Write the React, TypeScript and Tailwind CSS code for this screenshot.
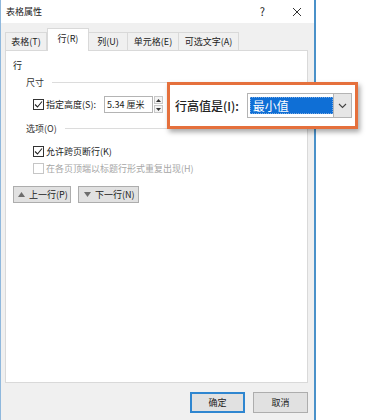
import React from "react";

function Check({ checked = false, disabled = false }: { checked?: boolean; disabled?: boolean }) {
  return (
    <div
      className={`w-[11px] h-[11px] border bg-white flex items-center justify-center ${
        disabled ? "border-[#c6c6c6]" : "border-[#333]"
      }`}
    >
      {checked && (
        <svg width="9" height="9" viewBox="0 0 9 9">
          <path d="M1 4.5 L3.5 7 L8 1.5" fill="none" stroke="#222" strokeWidth="1.1" />
        </svg>
      )}
    </div>
  );
}

export default function App() {
  return (
    <div className="relative w-[370px] h-[420px] bg-white overflow-hidden font-['Noto_Sans_CJK_SC',sans-serif] text-[9px] text-[#1a1a1a] leading-none">
      <div className="w-[316px] h-[420px] flex flex-col border-l border-l-[#8fb8dd] border-r-2 border-r-[#4a91c9] bg-[#f0f0f0]">
        {/* Title bar */}
        <div className="h-[23px] bg-white flex items-center pl-[5px] shrink-0">
          <span className="text-[9px]">表格属性</span>
          <div className="flex-1" />
          <span className="text-[11px] mr-[27px]">?</span>
          <svg width="10" height="10" viewBox="0 0 10 10" className="mr-[12px]">
            <path d="M1 1 L9 9 M9 1 L1 9" stroke="#333" strokeWidth="1" />
          </svg>
        </div>
        {/* Tabs */}
        <div className="h-[27px] flex items-end pl-[4px] shrink-0 relative z-10">
          <div className="h-[18px] w-[42px] border border-[#d9d9d9] border-b-0 bg-[#f0f0f0] flex items-center justify-center">表格(T)</div>
          <div className="h-[23px] w-[42px] -mb-[1px] border border-[#d9d9d9] border-b-0 bg-white flex items-start pt-[5px] justify-center">行(R)</div>
          <div className="h-[18px] w-[39px] border border-[#d9d9d9] border-b-0 border-l-0 bg-[#f0f0f0] flex items-center justify-center">列(U)</div>
          <div className="h-[18px] w-[51px] border border-[#d9d9d9] border-b-0 border-l-0 bg-[#f0f0f0] flex items-center justify-center">单元格(E)</div>
          <div className="h-[18px] w-[60px] border border-[#d9d9d9] border-b-0 border-l-0 bg-[#f0f0f0] flex items-center justify-center">可选文字(A)</div>
        </div>
        {/* Panel */}
        <div className="ml-[4px] mr-[6px] h-[333px] shrink-0 border border-[#d9d9d9] bg-white flex flex-col pl-[7px]">
          <div className="mt-[10px]">行</div>
          <div className="mt-[8px] ml-[13px] flex items-center">
            <span className="text-[#333]">尺寸</span>
            <div className="ml-[8px] flex-1 h-px bg-[#dcdcdc] mr-[8px]" />
          </div>
          <div className="mt-[9px] ml-[20px] flex items-center">
            <Check checked />
            <span className="ml-[2px]">指定高度(S):</span>
            <div className="ml-[8px] w-[49px] h-[17px] border border-[#b4b4b4] flex items-center pl-[2px]">5.34 厘米</div>
            <div className="ml-[1px] w-[9px] h-[17px] flex flex-col gap-px">
              <div className="flex-1 border border-[#c8c8c8] bg-[#f4f4f4] flex items-center justify-center">
                <svg width="5" height="3" viewBox="0 0 5 3"><path d="M0 3 L2.5 0 L5 3Z" fill="#333" /></svg>
              </div>
              <div className="flex-1 border border-[#c8c8c8] bg-[#f4f4f4] flex items-center justify-center">
                <svg width="5" height="3" viewBox="0 0 5 3"><path d="M0 0 L2.5 3 L5 0Z" fill="#333" /></svg>
              </div>
            </div>
          </div>
          <div className="mt-[11px] ml-[13px] flex items-center">
            <span className="text-[#333]">选项(O)</span>
            <div className="ml-[8px] flex-1 h-px bg-[#dcdcdc] mr-[8px]" />
          </div>
          <div className="mt-[13px] ml-[20px] flex items-center">
            <Check checked />
            <span className="ml-[2px]">允许跨页断行(K)</span>
          </div>
          <div className="mt-[6px] ml-[20px] flex items-center text-[#a6a6a6]">
            <Check disabled />
            <span className="ml-[2px]">在各页顶端以标题行形式重复出现(H)</span>
          </div>
          <div className="mt-[12px] flex items-center gap-[7px]">
            <div className="w-[58px] h-[17px] bg-[#e1e1e1] border border-[#adadad] flex items-center pl-[4px]">
              <svg width="7" height="5" viewBox="0 0 7 5"><path d="M0 5 L3.5 0 L7 5Z" fill="#6d6d6d" /></svg>
              <span className="ml-[4px]">上一行(P)</span>
            </div>
            <div className="w-[61px] h-[17px] bg-[#e1e1e1] border border-[#adadad] flex items-center pl-[5px]">
              <svg width="7" height="5" viewBox="0 0 7 5"><path d="M0 0 L3.5 5 L7 0Z" fill="#6d6d6d" /></svg>
              <span className="ml-[4px]">下一行(N)</span>
            </div>
          </div>
        </div>
        {/* Footer */}
        <div className="flex justify-end gap-[8px] mr-[6px] mt-[9px]">
          <div className="w-[55px] h-[21px] bg-[#e1e1e1] border-2 border-[#2f86d0] flex items-center justify-center">确定</div>
          <div className="w-[55px] h-[21px] bg-[#e1e1e1] border border-[#adadad] flex items-center justify-center">取消</div>
        </div>
      </div>

      {/* Callout overlay */}
      <div className="absolute left-[167px] top-[82px] w-[191px] h-[47px] border-[3px] border-[#e5703c] bg-white shadow-[2px_3px_5px_rgba(0,0,0,0.35)] flex items-center pl-[5px]">
        <span className="text-[12px] text-[#222] font-medium">行高值是(I):</span>
        <div className="ml-[8px] w-[105px] h-[25px] border border-[#b4b4b4] bg-white flex items-stretch">
          <div className="flex-1 flex items-center py-[3px] pl-[2px]">
            <div className="w-full h-[17px] bg-[#0f6fd6] border border-dotted border-[#7aa9e0] flex items-center pl-[2px] text-white text-[12px]">最小值</div>
          </div>
          <div className="w-[18px] border-l border-[#b4b4b4] bg-[#e6e6e6] flex items-center justify-center">
            <svg width="9" height="6" viewBox="0 0 9 6"><path d="M1 1 L4.5 4.5 L8 1" fill="none" stroke="#444" strokeWidth="1.1" /></svg>
          </div>
        </div>
      </div>
    </div>
  );
}
